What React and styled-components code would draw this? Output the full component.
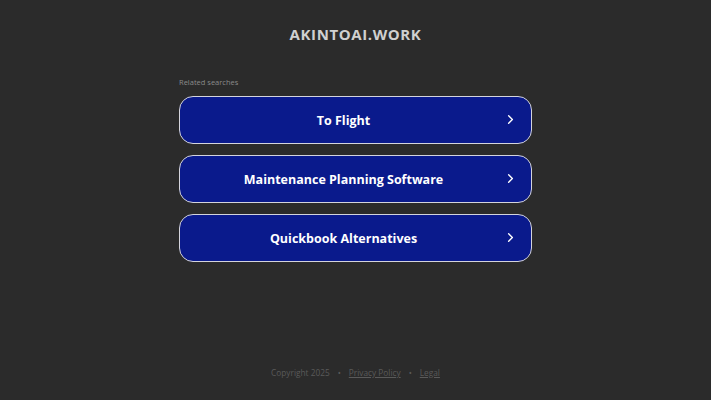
import styled, { createGlobalStyle } from "styled-components";

const Global = createGlobalStyle`
  html, body {
    margin: 0;
    padding: 0;
    background: #2b2b2b;
    font-family: "Open Sans", "Liberation Sans", sans-serif;
  }
`;

const links = ["To Flight", "Maintenance Planning Software", "Quickbook Alternatives"];

const App = () => {
  return (
    <Page>
      <Global />
      <Title>AKINTOAI.WORK</Title>
      <Related>
        <Label>Related searches</Label>
        {links.map((l) => (
          <Button key={l} href="#">
            <span>{l}</span>
            <Chevron viewBox="0 0 24 24">
              <path d="M9 6l6 6-6 6" />
            </Chevron>
          </Button>
        ))}
      </Related>
      <Footer>
        <span>Copyright 2025</span>
        <Dot>•</Dot>
        <FootLink href="#">Privacy Policy</FootLink>
        <Dot>•</Dot>
        <FootLink href="#">Legal</FootLink>
      </Footer>
    </Page>
  );
};

export default App;

const Page = styled.div`
  height: 400px;
  display: flex;
  flex-direction: column;
  align-items: center;
  box-sizing: border-box;
  padding-top: 23px;
`;

const Title = styled.h1`
  margin: 0;
  font-size: 15px;
  line-height: 22px;
  font-weight: 700;
  color: #d0d0d0;
  letter-spacing: 0.6px;
`;

const Related = styled.div`
  width: 353px;
  margin-top: 32px;
  display: flex;
  flex-direction: column;
  gap: 11px;
`;

const Label = styled.div`
  font-size: 7.5px;
  line-height: 10px;
  color: #8a8a8a;
  margin-bottom: -2px;
`;

const Button = styled.a`
  position: relative;
  height: 48px;
  box-sizing: border-box;
  border: 1.5px solid #d4d4dc;
  border-radius: 14px;
  background: #0a1a8c;
  display: flex;
  align-items: center;
  justify-content: center;
  padding-right: 24px;
  color: #fff;
  font-size: 12.5px;
  font-weight: 700;
  text-decoration: none;
`;

const Chevron = styled.svg`
  position: absolute;
  right: 13px;
  top: 50%;
  width: 15px;
  height: 15px;
  margin-top: -8px;
  fill: none;
  stroke: #fff;
  stroke-width: 2.2;
  stroke-linecap: round;
  stroke-linejoin: round;
`;

const Footer = styled.div`
  margin-top: auto;
  margin-bottom: 22px;
  display: flex;
  gap: 8px;
  font-size: 8.3px;
  color: #5a5a5a;
`;

const Dot = styled.span``;

const FootLink = styled.a`
  color: #5a5a5a;
  text-decoration: underline;
`;
